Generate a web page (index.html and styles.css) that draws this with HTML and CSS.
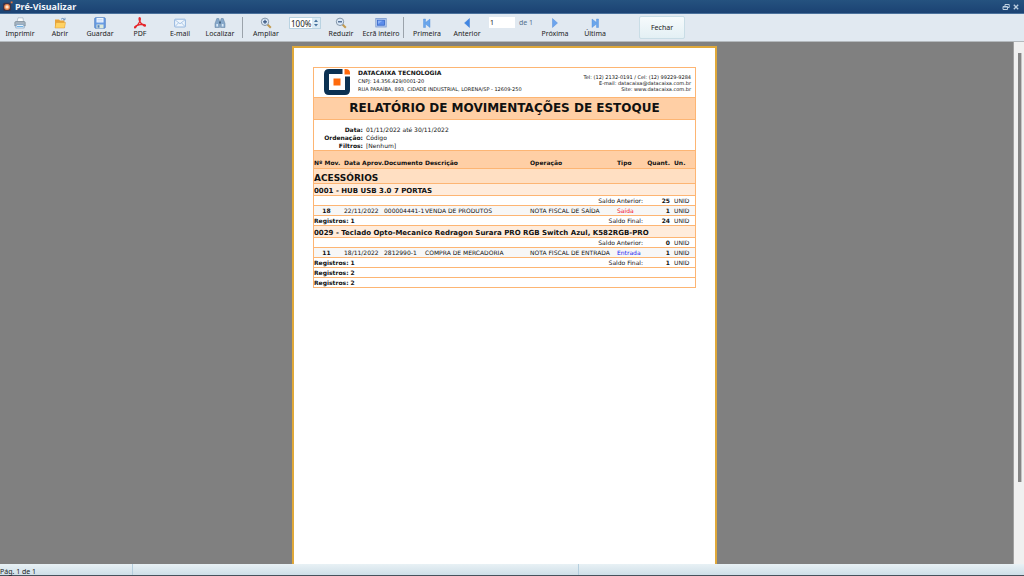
FILE: index.html
```html
<!DOCTYPE html>
<html lang="pt">

<head>
  <meta charset="utf-8">
  <title>Pré-Visualizar</title>
  <link rel="stylesheet" href="styles.css">
</head>

<body>
  <header class="titlebar">
    <svg class="app-icon" viewBox="0 0 12 12">
      <rect x="1" y="2" width="9" height="9" rx="2" fill="#3b3246"/>
      <circle cx="5.500" cy="6.500" r="3.200" fill="#f08a50"/>
      <circle cx="5.500" cy="6.500" r="1.800" fill="#ffe3cd"/>
      <path d="M9.500 .5h2v2h-2z" fill="#e8743a"/>
    </svg>
    <h1>Pré-Visualizar</h1>
    <button class="win" aria-label="Restaurar">
      <svg viewBox="0 0 8 8"><path d="M3 3V1.500h4.200V4.500H6M1 3.500h4.500V6.500H1z M1 4h4.500" fill="none" stroke="#bccfe0"/></svg>
    </button>
    <button class="win" aria-label="Fechar janela">
      <svg viewBox="0 0 8 8"><path d="M1.800 1.800l4.400 4.400M6.200 1.800L1.800 6.200" stroke="#bccfe0" stroke-width="1.300"/></svg>
    </button>
  </header>

  <nav class="toolbar">
    <button class="tool">
      <svg viewBox="0 0 12 12">
        <path d="M3 5L4 .8h5L9.500 5z" fill="#fbfcfd" stroke="#9aa9b8" stroke-width=".6"/>
        <path d="M.8 5.500Q1 4.500 2 4.500h8q1 0 1.200 1V9H.8z" fill="#a5b3c0" stroke="#71818f" stroke-width=".6"/>
        <path d="M2.500 7.500h7l.8 3.500H1.700z" fill="#e6f1fb" stroke="#6f93b8" stroke-width=".6"/>
        <path d="M3 9.500h6" stroke="#6db3e8"/>
      </svg>
      <span>Imprimir</span>
    </button>
    <button class="tool">
      <svg viewBox="0 0 12 12">
        <path d="M1 2.500h4l1 1h4.500V11H1z" fill="#e9a43a"/>
        <path d="M1 11l1-5.500h9.500L10.500 11z" fill="#ffd263" stroke="#dd9a35" stroke-width=".5"/>
        <path d="M7 2.200q2-2 3.500.3M11 .8v2H9" fill="none" stroke="#5d86b8" stroke-width=".8"/>
      </svg>
      <span>Abrir</span>
    </button>
    <button class="tool">
      <svg viewBox="0 0 12 12">
        <rect x=".7" y=".7" width="10.600" height="10.600" rx="1" fill="#6a9de4" stroke="#4678c2" stroke-width=".7"/>
        <rect x="2.500" y="1" width="7" height="4.500" fill="#eef5ff"/>
        <path d="M3.500 2.500h5M3.500 4h5" stroke="#a9c5ea" stroke-width=".5"/>
        <rect x="2.500" y="7.500" width="7" height="3.800" fill="#dce9da"/>
        <rect x="3.500" y="8.200" width="2" height="2.500" fill="#5481bf"/>
      </svg>
      <span>Guardar</span>
    </button>
    <button class="tool">
      <svg viewBox="0 0 12 12">
        <path d="M5.300.8q1.200-.4 1 1.700Q6 5.500 1.500 10.500q-1 .8-1-.2Q1.500 8.500 6 7.700q4-.7 5.300.4.500 1.200-1.200.8Q7 7.500 5.400 3.500 4.800 1.500 5.300.8z" fill="none" stroke="#e5262b" stroke-width="1.300"/>
      </svg>
      <span>PDF</span>
    </button>
    <button class="tool">
      <svg viewBox="0 0 12 12">
        <rect x=".6" y="2.200" width="10.800" height="7.800" rx=".8" fill="#eef5fc" stroke="#8db1dc" stroke-width=".9"/>
        <path d="M1 2.800l5 4 5-4M1 9.600l3.500-3.800M11 9.600L7.500 5.800" fill="none" stroke="#8db1dc" stroke-width=".7"/>
      </svg>
      <span>E-mail</span>
    </button>
    <button class="tool">
      <svg viewBox="0 0 12 12">
        <path d="M2.800 1.500h2L5.500 4v6.500H1V6.500zM7.200 1.500h2L11 6.500v4H6.500V4z" fill="#86a8ca" stroke="#5b7c9c" stroke-width=".5"/>
        <path d="M5 4.500h2v2H5z" fill="#476988"/>
        <path d="M2.300 7h1.700v2.500H2.300zM7.800 7h1.700v2.500H7.800z" fill="#d8e8f6"/>
      </svg>
      <span>Localizar</span>
    </button>
    <i class="sep"></i>
    <button class="tool">
      <svg viewBox="0 0 12 12">
        <path d="M7.500 7.500l3.300 3.300" stroke="#c39b50" stroke-width="2"/>
        <circle cx="5" cy="4.800" r="3.700" fill="#dbe9f8" stroke="#8596a8"/>
        <path d="M3 4.800h4M5 2.800v4" stroke="#34527d" stroke-width="1.200"/>
      </svg>
      <span>Ampliar</span>
    </button>
    <div class="zoom">
      <input type="text" value="100%" aria-label="Zoom">
      <button aria-label="Alterar zoom">
        <svg viewBox="0 0 6 10"><path d="M1 4l2-2.500L5 4zM1 6l2 2.500L5 6z" fill="#48749f"/></svg>
      </button>
    </div>
    <button class="tool">
      <svg viewBox="0 0 12 12">
        <path d="M7.500 7.500l3.300 3.300" stroke="#c39b50" stroke-width="2"/>
        <circle cx="5" cy="4.800" r="3.700" fill="#dbe9f8" stroke="#8596a8"/>
        <path d="M3 4.800h4" stroke="#34527d" stroke-width="1.200"/>
      </svg>
      <span>Reduzir</span>
    </button>
    <button class="tool">
      <svg viewBox="0 0 12 12">
        <rect x=".8" y="1.500" width="10.400" height="8.500" fill="#b9cdf0" stroke="#7b9ad0" stroke-width=".8"/>
        <rect x="2.500" y="3.200" width="7" height="5" fill="#5c8cea" stroke="#3566c8" stroke-width=".8"/>
        <path d="M3 3.800h4.500L3 7z" fill="#8db2f6"/>
      </svg>
      <span>Ecrã inteiro</span>
    </button>
    <i class="sep"></i>
    <button class="tool">
      <svg viewBox="0 0 12 12"><path d="M2.500 2h2v3.500l4.500-3.500v8.500l-4.500-3.500v3.500h-2z" fill="#6aa6ec" stroke="#4a88d8" stroke-width=".4"/></svg>
      <span>Primeira</span>
    </button>
    <button class="tool">
      <svg viewBox="0 0 12 12"><path d="M8.500 1.500v9L3.500 6z" fill="#3f86e4" stroke="#2f6fcc" stroke-width=".4"/></svg>
      <span>Anterior</span>
    </button>
    <div class="pager">
      <input type="text" id="page" value="1">
      <label for="page">de 1</label>
    </div>
    <button class="tool">
      <svg viewBox="0 0 12 12"><path d="M3.500 1.500v9l5-4.500z" fill="#6ba4ee" stroke="#4480d4" stroke-width=".4"/></svg>
      <span>Próxima</span>
    </button>
    <button class="tool">
      <svg viewBox="0 0 12 12"><path d="M9.500 2h-2v3.500L3 2v8.500l4.500-3.500v3.500h2z" fill="#6aa6ec" stroke="#4a88d8" stroke-width=".4"/></svg>
      <span>Última</span>
    </button>
    <button class="close">Fechar</button>
  </nav>

  <main class="workspace">
    <div class="canvas">
      <article class="paper">
        <div class="report">
          <section class="company">
            <svg class="logo" viewBox="0 0 26 26">
              <path d="M18.500 2.500H5Q2.500 2.500 2.500 5v16q0 2.500 2.500 2.500h16q2.500 0 2.500-2.500V7.500" fill="none" stroke="#0b3152" stroke-width="5"/>
              <path d="M20.500 0h1q4.500 0 4.500 4v1.500h-5.500z" fill="#ff6a0c"/>
              <rect x="9.500" y="9.500" width="7" height="7" fill="#ff6a0c"/>
            </svg>
            <div class="address">
              <strong>DATACAIXA TECNOLOGIA</strong>
              <span>CNPJ: 14.356.429/0001-20</span>
              <span>RUA PARAÍBA, 893, CIDADE INDUSTRIAL, LORENA/SP - 12609-250</span>
            </div>
            <div class="contact">
              <span>Tel: (12) 2132-0191 / Cel: (12) 99229-9284</span>
              <span>E-mail: datacaixa@datacaixa.com.br</span>
              <span>Site: www.datacaixa.com.br</span>
            </div>
          </section>
          <h2>RELATÓRIO DE MOVIMENTAÇÕES DE ESTOQUE</h2>
          <dl class="filters">
            <dt>Data:</dt><dd>01/11/2022 até 30/11/2022</dd>
            <dt>Ordenação:</dt><dd>Código</dd>
            <dt>Filtros:</dt><dd>[Nenhum]</dd>
          </dl>
          <table>
            <colgroup>
              <col class="c-mov"><col class="c-date"><col class="c-doc"><col class="c-desc">
              <col class="c-op"><col class="c-type"><col class="c-qty"><col class="c-unit">
            </colgroup>
            <thead>
              <tr>
                <th>Nº Mov.</th><th>Data Aprov.</th><th>Documento</th><th>Descrição</th>
                <th>Operação</th><th>Tipo</th><th class="num">Quant.</th><th class="unit">Un.</th>
              </tr>
            </thead>
            <tbody>
              <tr class="group"><td colspan="8">ACESSÓRIOS</td></tr>
              <tr class="product"><td colspan="8">0001 - HUB USB 3.0 7 PORTAS</td></tr>
              <tr>
                <td colspan="6" class="balance">Saldo Anterior:</td>
                <td class="num">25</td><td class="unit">UNID</td>
              </tr>
              <tr class="move">
                <td class="mov">18</td><td>22/11/2022</td><td>000004441-1</td><td>VENDA DE PRODUTOS</td>
                <td>NOTA FISCAL DE SAÍDA</td><td class="out">Saída</td><td class="num">1</td><td class="unit">UNID</td>
              </tr>
              <tr>
                <td colspan="3" class="count">Registros: 1</td>
                <td colspan="3" class="balance">Saldo Final:</td>
                <td class="num">24</td><td class="unit">UNID</td>
              </tr>
              <tr class="product"><td colspan="8">0029 - Teclado Opto-Mecanico Redragon Surara PRO RGB Switch Azul, K582RGB-PRO</td></tr>
              <tr>
                <td colspan="6" class="balance">Saldo Anterior:</td>
                <td class="num">0</td><td class="unit">UNID</td>
              </tr>
              <tr class="move">
                <td class="mov">11</td><td>18/11/2022</td><td>2812990-1</td><td>COMPRA DE MERCADORIA</td>
                <td>NOTA FISCAL DE ENTRADA</td><td class="in">Entrada</td><td class="num">1</td><td class="unit">UNID</td>
              </tr>
              <tr>
                <td colspan="3" class="count">Registros: 1</td>
                <td colspan="3" class="balance">Saldo Final:</td>
                <td class="num">1</td><td class="unit">UNID</td>
              </tr>
              <tr><td colspan="8" class="count">Registros: 2</td></tr>
              <tr><td colspan="8" class="count">Registros: 2</td></tr>
            </tbody>
          </table>
        </div>
      </article>
    </div>
    <div class="scrollbar"><div class="thumb"></div></div>
  </main>

  <footer class="statusbar">
    <span class="page-status">Pág. 1 de 1</span>
    <span class="message"></span>
  </footer>
</body>

</html>
```

FILE: styles.css
```css
* {
  box-sizing: border-box;
}

body {
  margin: 0;
  height: 100vh;
  display: flex;
  flex-direction: column;
  overflow: hidden;
  font-family: "Noto Sans", sans-serif;
  font-size: 7px;
  color: #1c1c1c;
}

button,
input {
  font: inherit;
  color: inherit;
  margin: 0;
  padding: 0;
  border: 0;
  background: none;
}

/* title bar */
.titlebar {
  display: flex;
  align-items: center;
  flex: none;
  height: 14px;
  padding: 0 3px 0 2px;
  background: linear-gradient(#25527f, #1b4273);
  border-bottom: 1px solid #4a719c;
}

.titlebar h1 {
  flex: 1;
  margin: 0 0 0 2px;
  font-size: 9px;
  line-height: 12px;
  color: #f2f6fa;
}

.app-icon {
  width: 11px;
  height: 11px;
}

.win {
  width: 10px;
  height: 10px;
}

.win svg {
  display: block;
  width: 8px;
  height: 8px;
  margin: auto;
}

/* toolbar */
.toolbar {
  display: flex;
  flex: none;
  height: 28px;
  background: #e1e9f1;
  border-bottom: 1px solid #b4b9bd;
}

.tool {
  display: flex;
  flex-direction: column;
  align-items: center;
  width: 40px;
  padding-top: 3px;
  white-space: nowrap;
}

.tool svg {
  width: 12px;
  height: 12px;
  flex: none;
}

.tool span {
  line-height: 10px;
}

.sep {
  width: 1px;
  margin: 3px 3px 3px 2px;
  background: #9ba3ab;
}

.zoom {
  display: flex;
  width: 32px;
  height: 12px;
  margin: 3px 0 0 3px;
  background: #fff;
  border: 1px solid #b9d3e2;
}

.zoom input {
  width: 22px;
  padding-left: 1px;
  font-size: 8px;
}

.zoom button {
  flex: 1;
  background: #dcebf4;
}

.zoom svg {
  display: block;
  width: 6px;
  height: 10px;
  margin: auto;
}

.pager {
  display: flex;
  width: 48px;
  padding: 3px 0 0 2px;
}

.pager input {
  width: 26px;
  height: 11px;
  padding-left: 1px;
  background: #fff;
}

.pager label {
  margin-left: 4px;
  line-height: 11px;
  color: #55718e;
  white-space: nowrap;
}

.close {
  width: 46px;
  height: 23px;
  margin: 2px 0 0 24px;
  background: linear-gradient(#f6fafc, #e3f0f4);
  border: 1px solid #c9dde6;
  border-radius: 2px;
}

/* preview area */
.workspace {
  display: flex;
  flex: 1;
  min-height: 0;
  background: #808080;
}

.canvas {
  flex: 1;
  overflow: hidden;
  padding: 4px 4px 0 0;
}

.paper {
  width: 425px;
  min-height: 100%;
  margin: 0 auto;
  padding: 19px;
  background: #fff;
  border: 2px solid #dfa83a;
  border-bottom: 0;
}

.scrollbar {
  width: 11px;
  padding: 11px 2px 0 4px;
  background: #f0f0f0;
  border-left: 1px solid #a0a0a0;
}

.thumb {
  width: 4px;
  height: 84%;
  background: #858585;
  border-right: 1px solid #c4c4c4;
}

/* report */
.report {
  border: 1px solid #fdb573;
  border-bottom: 0;
  font-family: "DejaVu Sans", Verdana, sans-serif;
  font-size: 6px;
  color: #111;
}

.company {
  display: flex;
  padding: 1px 4px 2px 10px;
  font-size: 5px;
  white-space: nowrap;
}

.logo {
  width: 26px;
  height: 26px;
  flex: none;
}

.address {
  display: flex;
  flex: 1;
  flex-direction: column;
  margin-left: 8px;
  line-height: 8px;
}

.address strong {
  font-size: 6px;
}

.contact {
  display: flex;
  flex-direction: column;
  padding-top: 5px;
  line-height: 6px;
  text-align: right;
}

.report h2 {
  margin: 0;
  font-size: 12px;
  line-height: 21px;
  text-align: center;
  background: #ffcfa5;
  border: solid #fdb573;
  border-width: 1px 0;
}

.filters {
  display: grid;
  grid-template-columns: 49px 1fr;
  column-gap: 3px;
  margin: 0;
  padding: 6px 0 0;
  line-height: 8px;
}

.filters dt {
  font-weight: bold;
  text-align: right;
}

.filters dd {
  margin: 0;
}

table {
  width: 100%;
  table-layout: fixed;
  border-spacing: 0;
  border-top: 1px solid #fdb573;
  line-height: 9px;
  white-space: nowrap;
}

.c-mov { width: 30px; }
.c-date { width: 40px; }
.c-doc { width: 41px; }
.c-op { width: 87px; }
.c-type { width: 26px; }
.c-qty { width: 27px; }
.c-unit { width: 25px; }

th,
td {
  padding: 0;
  border-bottom: 1px solid #fdb573;
  text-align: left;
}

th {
  padding: 7px 0 1px;
  background: #ffcfa5;
}

.group td {
  padding-top: 5px;
  font-size: 9px;
  font-weight: bold;
  background: #ffdfc2;
}

.product td {
  padding-top: 3px;
  font-size: 7px;
  font-weight: bold;
  line-height: 8px;
  background: #ffecdc;
}

.move td {
  background: #f7f7f7;
}

.move .mov {
  padding-right: 5px;
  font-weight: bold;
  text-align: center;
}

.count {
  font-weight: bold;
}

.balance {
  text-align: right;
}

.num {
  font-weight: bold;
  text-align: right;
}

.unit {
  padding-left: 4px;
}

.move .out {
  color: #f00f2a;
}

.move .in {
  color: #1818f0;
}

/* status bar */
.statusbar {
  display: flex;
  flex: none;
  height: 12px;
  line-height: 16px;
  background: linear-gradient(#e8f1f5, #cfdfe8);
  border-bottom: 1px solid #47525c;
}

.page-status {
  width: 133px;
  border-right: 1px solid #b4cede;
}

.message {
  width: 446px;
  border-right: 1px solid #b4cede;
}
```
